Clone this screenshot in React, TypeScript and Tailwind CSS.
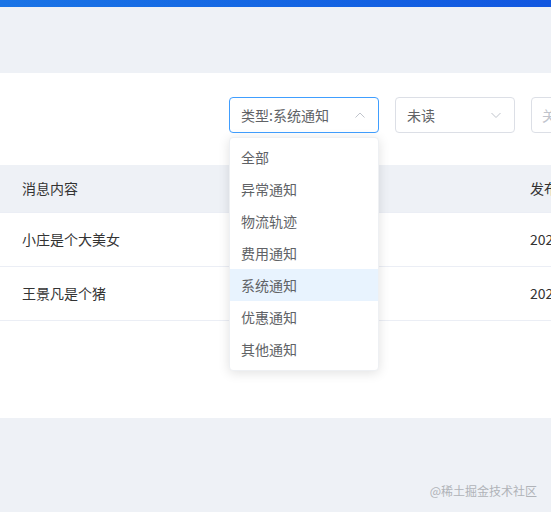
import React from 'react';

const options = ['全部', '异常通知', '物流轨迹', '费用通知', '系统通知', '优惠通知', '其他通知'];

const rows = [
  { content: '小庄是个大美女', time: '2023-03-15 10:20:30' },
  { content: '王景凡是个猪', time: '2023-03-14 09:12:45' },
];

function Chevron({ up }: { up?: boolean }) {
  return (
    <svg width="12" height="12" viewBox="0 0 12 12" fill="none" stroke="#c0c4cc" strokeWidth="1">
      {up ? <path d="M1.5 8.5 6 4l4.5 4.5" /> : <path d="M1.5 4 6 8.5 10.5 4" />}
    </svg>
  );
}

export default function App() {
  return (
    <div
      className="relative w-[551px] h-[512px] overflow-hidden bg-[#eef1f6] text-[14px]"
      style={{ fontFamily: '"Noto Sans CJK SC", "Noto Sans", sans-serif' }}
    >
      <div className="h-[7px] bg-gradient-to-r from-[#1a74e6] to-[#1257e0]" />
      <div className="h-[66px]" />

      <div className="bg-white h-[345px] w-[800px]">
        {/* filters */}
        <div className="flex items-center pt-[24px] pl-[229px] gap-[16px]">
          <div className="w-[150px] h-[36px] border border-[#409eff] rounded-[4px] flex items-center justify-between pl-[11px] pr-[12px] text-[#606266]">
            <span>类型:系统通知</span>
            <Chevron up />
          </div>
          <div className="w-[120px] h-[36px] border border-[#dcdfe6] rounded-[4px] flex items-center justify-between pl-[11px] pr-[12px] text-[#606266]">
            <span>未读</span>
            <Chevron />
          </div>
          <div className="w-[150px] h-[36px] border border-[#dcdfe6] rounded-[4px] flex items-center pl-[10px] text-[#c0c4cc]">
            <span>关键字</span>
          </div>
        </div>

        {/* table */}
        <div className="mt-[32px] text-[#333]">
          <div className="h-[48px] bg-[#eef1f6] flex items-center border-b border-[#ebeef5]">
            <div className="w-[530px] pl-[22px]">消息内容</div>
            <div>发布时间</div>
          </div>
          {rows.map((r) => (
            <div key={r.content} className="h-[54px] flex items-center border-b border-[#ebeef5]">
              <div className="w-[530px] pl-[22px]">{r.content}</div>
              <div>{r.time}</div>
            </div>
          ))}
        </div>
      </div>

      {/* dropdown */}
      <div className="absolute left-[229px] top-[137px] w-[150px] bg-white rounded-[4px] shadow-[0_2px_12px_rgba(0,0,0,0.12)] border border-[#eef0f3] pt-[3px] pb-[5px]">
        {options.map((o) => (
          <div
            key={o}
            className={
              o === '系统通知'
                ? 'h-[32px] flex items-center pl-[11px] bg-[#e8f3fe] text-[#606266]'
                : 'h-[32px] flex items-center pl-[11px] text-[#606266]'
            }
          >
            {o}
          </div>
        ))}
      </div>

      <div className="absolute right-[14px] bottom-[12px] text-[12px] text-[#b0b3b8]">@稀土掘金技术社区</div>
    </div>
  );
}
